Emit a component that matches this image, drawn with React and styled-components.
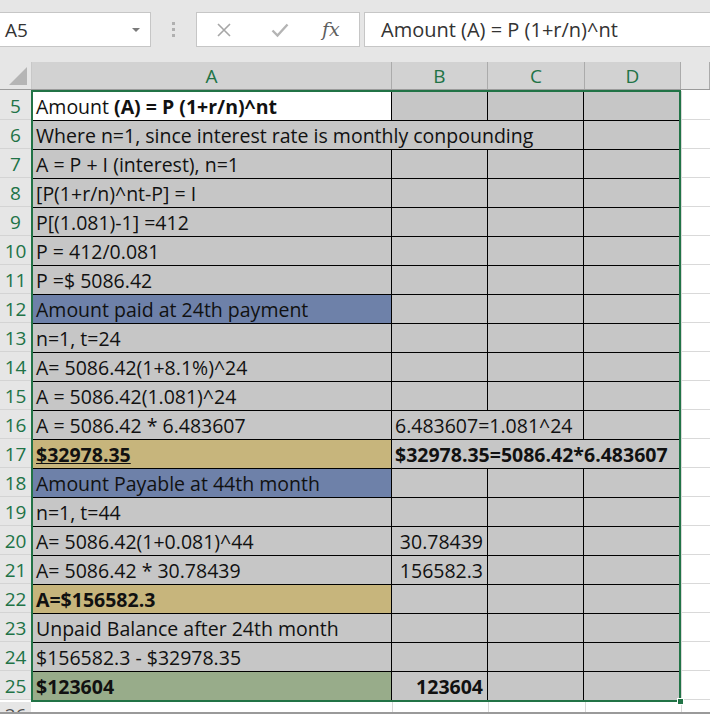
import React from "react";
import styled, { createGlobalStyle } from "styled-components";

const Global = createGlobalStyle`
  body { margin: 0; background: #ffffff; overflow: hidden; }
  * { box-sizing: border-box; }
`;

const Page = styled.div`
  width: 710px;
  height: 714px;
  overflow: hidden;
  background: #ffffff;
  font-family: "Open Sans", "Noto Sans", sans-serif;
`;

const Toolbar = styled.div`
  height: 62px;
  background: #e6e6e6;
  display: flex;
  align-items: flex-start;
  padding-top: 12px;
`;

const NameBox = styled.div`
  width: 151px;
  height: 35px;
  background: #fff;
  border: 1px solid #c6c6c6;
  border-left: none;
  display: flex;
  align-items: center;
  justify-content: space-between;
  padding: 0 10px 0 5px;
  font-size: 19px;
  color: #333;
`;

const Caret = styled.span`
  width: 0;
  height: 0;
  border-left: 4px solid transparent;
  border-right: 4px solid transparent;
  border-top: 4px solid #7a7a7a;
`;

const Grip = styled.div`
  width: 45px;
  height: 35px;
  display: flex;
  flex-direction: column;
  align-items: center;
  justify-content: center;
  gap: 3px;
`;

const Dot = styled.span`
  width: 3px;
  height: 3px;
  background: #b0b0b0;
`;

const FxBox = styled.div`
  width: 164px;
  height: 35px;
  background: #fff;
  border: 1px solid #c6c6c6;
  display: flex;
  align-items: center;
  padding-left: 19px;
  gap: 39px;
`;

const Fx = styled.span`
  font-family: "DejaVu Serif", "Liberation Serif", serif;
  font-style: italic;
  font-size: 19px;
  color: #5e5e5e;
  margin-left: -6px;
  margin-top: -2px;
`;

const FormulaBox = styled.div`
  flex: 1;
  height: 35px;
  margin-left: 4px;
  background: #fff;
  border: 1px solid #c6c6c6;
  border-right: none;
  display: flex;
  align-items: center;
  padding-left: 16px;
  font-size: 20px;
  color: #333;
`;

const HeaderRow = styled.div`
  display: grid;
  grid-template-columns: 32px 360px 96px 97px 96px 1fr;
  height: 28px;
  background: #e6e6e6;
  border-bottom: 1px solid #9b9b9b;
`;

const Corner = styled.div`
  position: relative;
  border-right: 1px solid #c8c8c8;
  &::after {
    content: "";
    position: absolute;
    right: 4px;
    bottom: 4px;
    border-left: 18px solid transparent;
    border-bottom: 18px solid #b5b5b5;
  }
`;

const ColHead = styled.div`
  background: ${(p) => (p.$sel ? "#d2d2d2" : "#e6e6e6")};
  border-right: 1px solid #ababab;
  color: #217346;
  font-size: 19px;
  display: flex;
  align-items: flex-end;
  justify-content: center;
  padding-bottom: 0;
`;

const Body = styled.div`
  display: flex;
  align-items: flex-start;
`;

const RowNums = styled.div`
  width: 31px;
  padding-top: 1px;
  background: #e6e6e6;
`;

const RowNum = styled.div`
  height: 29px;
  border-bottom: 1px solid #d4d4d4;
  color: ${(p) => (p.$sel ? "#217346" : "#555")};
  font-size: 19px;
  display: flex;
  align-items: center;
  justify-content: center;
  padding-top: 1px;
`;

const Range = styled.div`
  position: relative;
  width: 650px;
  border: 2px solid #217346;
`;

const Handle = styled.span`
  position: absolute;
  right: -5px;
  bottom: -5px;
  width: 7px;
  height: 7px;
  background: #217346;
  border: 1px solid #fff;
`;

const Row = styled.div`
  display: grid;
  grid-template-columns: 359px 96px 96px 1fr;
  border-bottom: ${(p) => (p.$last ? "none" : "1px solid #000")};
  height: ${(p) => (p.$last ? "28px" : "29px")};
`;

const fills = {
  gray: "#c6c6c6",
  white: "#ffffff",
  blue: "#6e81a9",
  tan: "#c7b57c",
  green: "#98ac8a",
};

const Cell = styled.div`
  grid-column: span ${(p) => p.$span || 1};
  background: ${(p) => fills[p.$fill || "gray"]};
  border-right: ${(p) => (p.$end ? "none" : "1px solid #000")};
  font-size: 19.5px;
  font-weight: ${(p) => (p.$bold ? 700 : 400)};
  text-decoration: ${(p) => (p.$u ? "underline" : "none")};
  color: #111;
  white-space: pre;
  overflow: hidden;
  display: flex;
  align-items: center;
  justify-content: ${(p) => (p.$num ? "flex-end" : "flex-start")};
  padding: 1px 4px 0 3px;
`;

const Extra = styled.div`
  flex: 1;
  padding-top: 1px;
`;

const ExtraCell = styled.div`
  height: 29px;
  border-bottom: 1px solid #d9d9d9;
  border-left: 1px solid #d9d9d9;
`;

const TailRow = styled.div`
  display: grid;
  grid-template-columns: 31px 362px 96px 97px 96px 1fr;
  height: 12px;
  border-bottom: 2px solid #9a9a9a;
`;

const TailNum = styled.div`
  background: #e6e6e6;
  color: #555;
  font-size: 19px;
  line-height: 26px;
  text-align: center;
  overflow: hidden;
`;

const TailCell = styled.div`
  border-right: 1px solid #d9d9d9;
`;

const Scroll = styled.div`
  height: 10px;
  background: #e6e6e6;
`;

const rows = [
  { n: 5, cells: [{ fill: "white", text: <span>Amount <b>(A) = P (1+r/n)^nt</b></span> }, {}, {}, {}] },
  { n: 6, cells: [{ span: 3, text: "Where n=1, since interest rate is monthly conpounding" }, {}] },
  { n: 7, cells: [{ text: "A = P + I (interest), n=1" }, {}, {}, {}] },
  { n: 8, cells: [{ text: "[P(1+r/n)^nt-P] = I" }, {}, {}, {}] },
  { n: 9, cells: [{ text: "P[(1.081)-1] =412" }, {}, {}, {}] },
  { n: 10, cells: [{ text: "P = 412/0.081" }, {}, {}, {}] },
  { n: 11, cells: [{ text: "P =$ 5086.42" }, {}, {}, {}] },
  { n: 12, cells: [{ fill: "blue", text: "Amount paid at 24th payment" }, {}, {}, {}] },
  { n: 13, cells: [{ text: "n=1, t=24" }, {}, {}, {}] },
  { n: 14, cells: [{ text: "A= 5086.42(1+8.1%)^24" }, {}, {}, {}] },
  { n: 15, cells: [{ text: "A = 5086.42(1.081)^24" }, {}, {}, {}] },
  { n: 16, cells: [{ text: "A = 5086.42 * 6.483607" }, { span: 2, text: "6.483607=1.081^24" }, {}] },
  {
    n: 17,
    cells: [
      { fill: "tan", bold: true, u: true, text: "$32978.35" },
      { span: 3, bold: true, text: "$32978.35=5086.42*6.483607" },
    ],
  },
  { n: 18, cells: [{ fill: "blue", text: "Amount Payable at 44th month" }, {}, {}, {}] },
  { n: 19, cells: [{ text: "n=1, t=44" }, {}, {}, {}] },
  { n: 20, cells: [{ text: "A= 5086.42(1+0.081)^44" }, { num: true, text: "30.78439" }, {}, {}] },
  { n: 21, cells: [{ text: "A= 5086.42 * 30.78439" }, { num: true, text: "156582.3" }, {}, {}] },
  { n: 22, cells: [{ fill: "tan", bold: true, text: "A=$156582.3" }, {}, {}, {}] },
  { n: 23, cells: [{ text: "Unpaid Balance after 24th month" }, {}, {}, {}] },
  { n: 24, cells: [{ text: "$156582.3 - $32978.35" }, {}, {}, {}] },
  { n: 25, cells: [{ fill: "green", bold: true, text: "$123604" }, { num: true, bold: true, text: "123604" }, {}, {}] },
];

function XIcon() {
  return (
    <svg width="16" height="16" viewBox="0 0 16 16">
      <path d="M2 2 L14 14 M14 2 L2 14" stroke="#a6a6a6" strokeWidth="1.6" fill="none" />
    </svg>
  );
}

function CheckIcon() {
  return (
    <svg width="18" height="16" viewBox="0 0 18 16">
      <path d="M1.5 8.5 L6.5 13.5 L16.5 2.5" stroke="#b4b4b4" strokeWidth="2.4" fill="none" />
    </svg>
  );
}

export default function App() {
  return (
    <Page>
      <Global />
      <Toolbar>
        <NameBox>
          A5
          <Caret />
        </NameBox>
        <Grip>
          <Dot />
          <Dot />
          <Dot />
        </Grip>
        <FxBox>
          <XIcon />
          <CheckIcon />
          <Fx>fx</Fx>
        </FxBox>
        <FormulaBox>Amount (A) = P (1+r/n)^nt</FormulaBox>
      </Toolbar>
      <HeaderRow>
        <Corner />
        <ColHead $sel>A</ColHead>
        <ColHead $sel>B</ColHead>
        <ColHead $sel>C</ColHead>
        <ColHead $sel>D</ColHead>
        <ColHead />
      </HeaderRow>
      <Body>
        <RowNums>
          {rows.map((r) => (
            <RowNum key={r.n} $sel>
              {r.n}
            </RowNum>
          ))}
        </RowNums>
        <Range>
          {rows.map((r, i) => (
            <Row key={r.n} $last={i === rows.length - 1}>
              {r.cells.map((c, j) => (
                <Cell
                  key={j}
                  $span={c.span}
                  $fill={c.fill}
                  $bold={c.bold}
                  $u={c.u}
                  $num={c.num}
                  $end={j === r.cells.length - 1}
                >
                  {c.text}
                </Cell>
              ))}
            </Row>
          ))}
          <Handle />
        </Range>
        <Extra>
          {rows.map((r) => (
            <ExtraCell key={r.n} />
          ))}
        </Extra>
      </Body>
      <TailRow>
        <TailNum>26</TailNum>
        <TailCell />
        <TailCell />
        <TailCell />
        <TailCell />
        <div />
      </TailRow>
      <Scroll />
    </Page>
  );
}
